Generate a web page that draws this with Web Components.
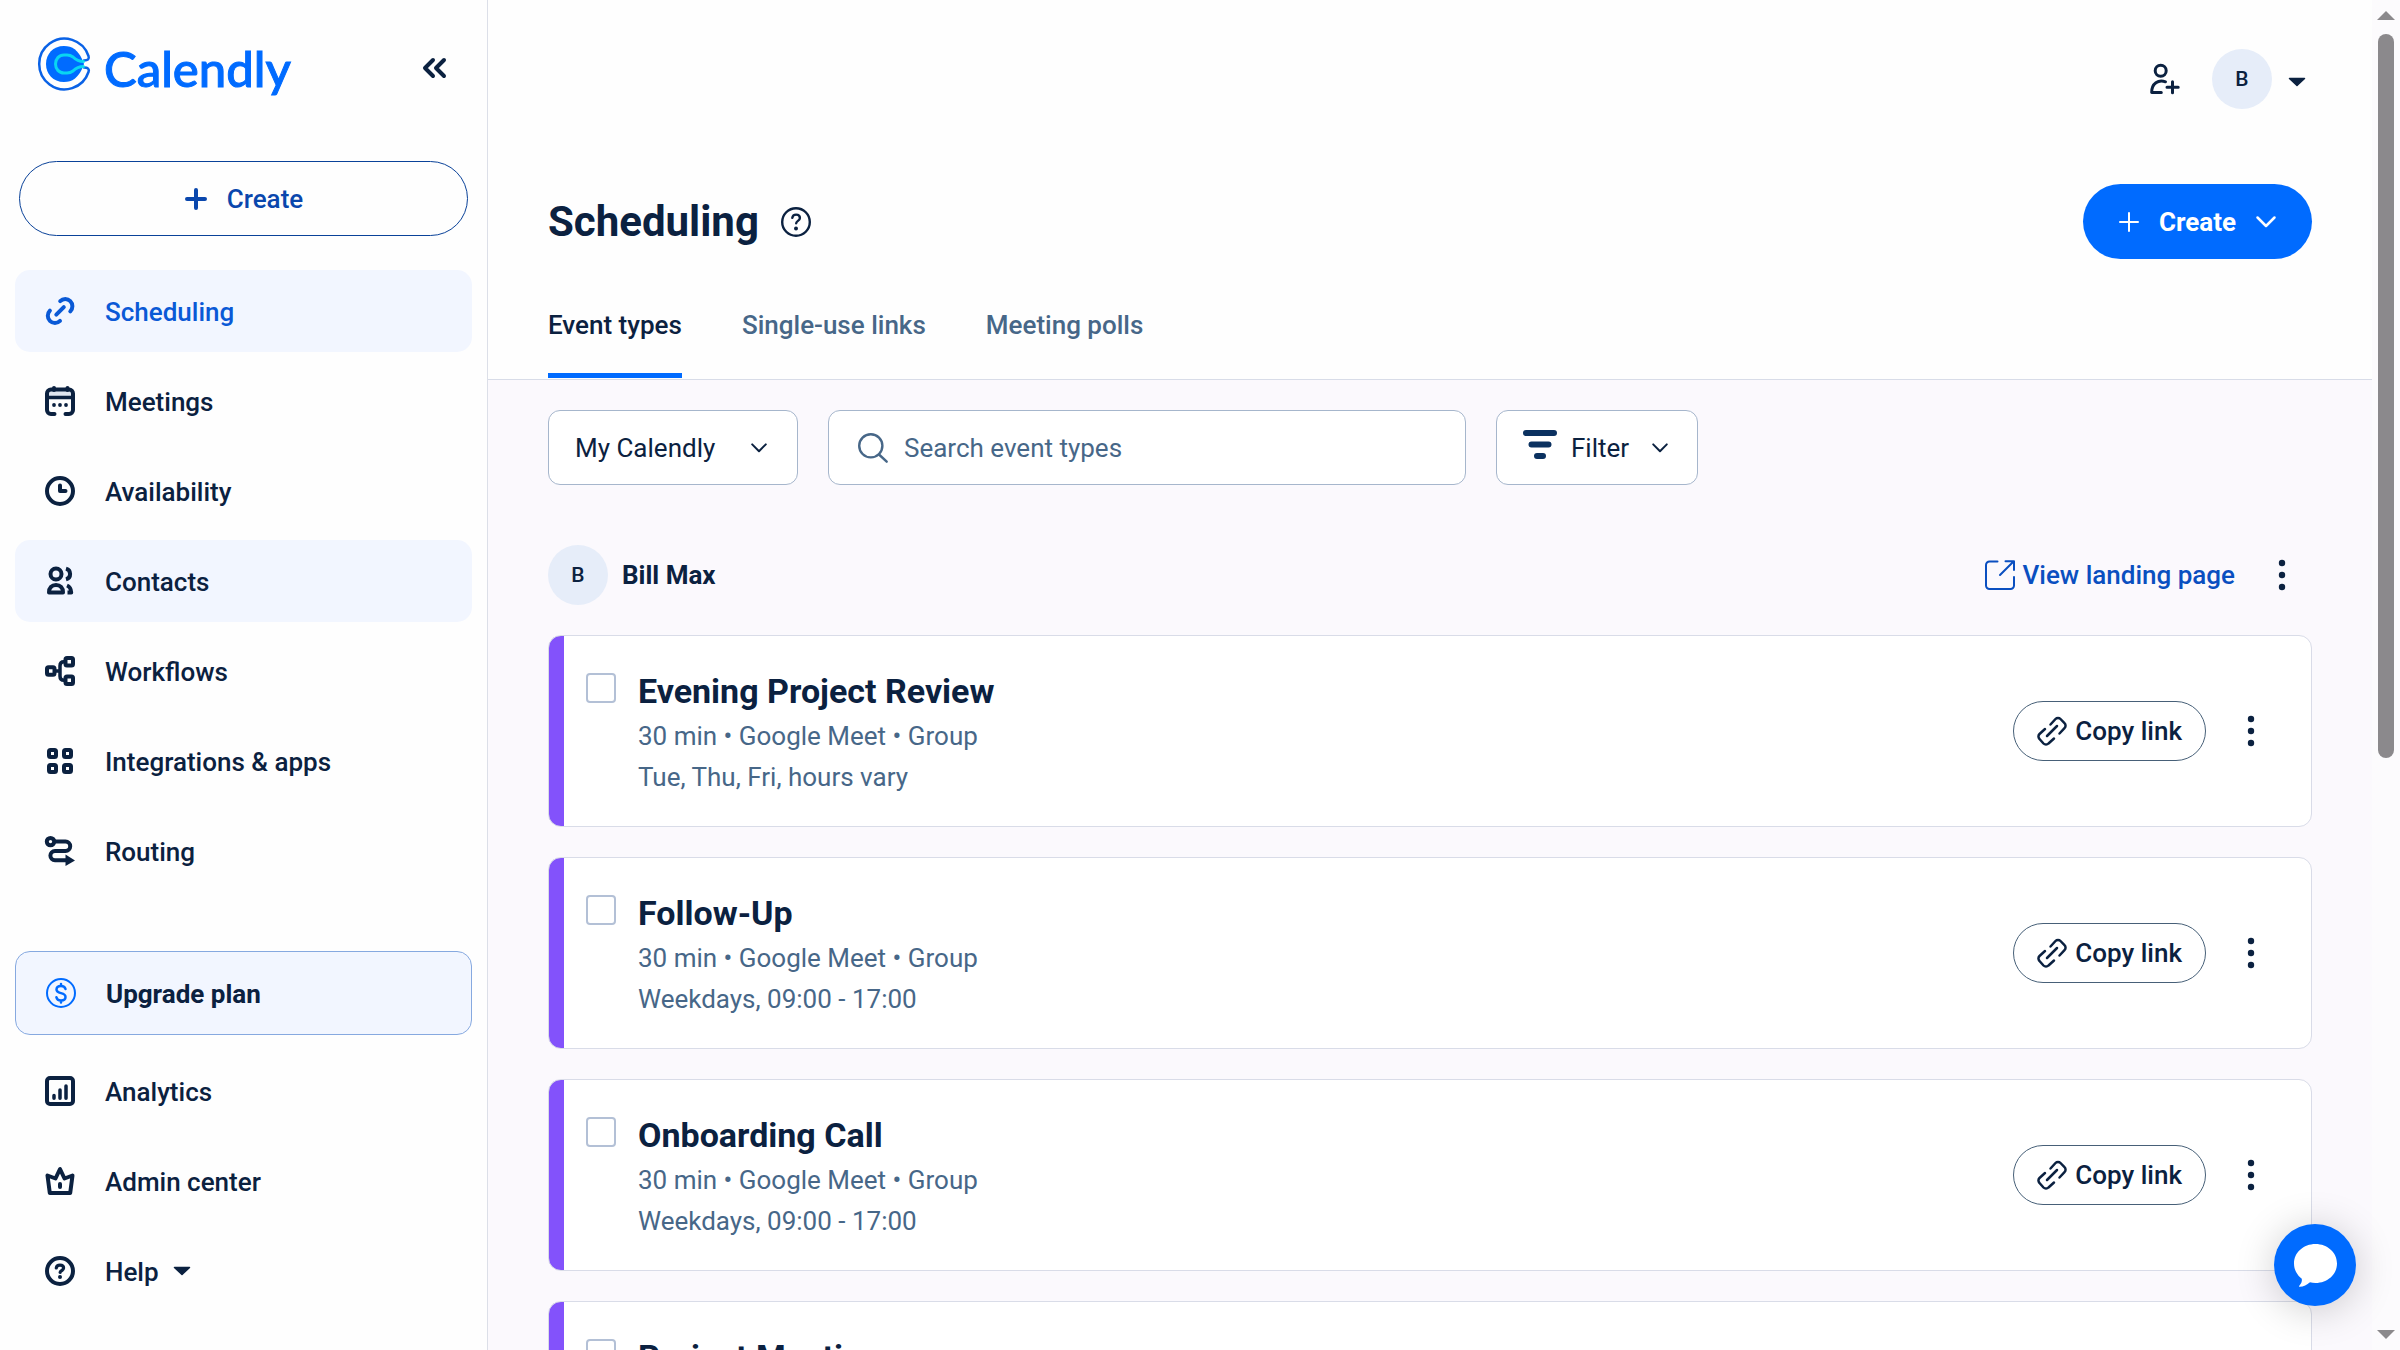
<!DOCTYPE html>
<html lang="en">
<head>
<meta charset="UTF-8">
<meta name="viewport" content="width=device-width, initial-scale=1.0">
<title>Scheduling - Calendly</title>
<style>
    body {
        margin: 0;
        font-family: Roboto, "Liberation Sans", sans-serif;
        font-size: 26px;
        line-height: 36px;
        color: #0b2140;
        background: #fefefe;
    }
</style>
</head>
<body>
<scheduling-app></scheduling-app>

<script>
const icons = {
    link: ['0 0 30 30', '<g stroke-width="4"><path d="M15.2 5.2A7.1 7.1 0 1 1 25.3 15.3M4.9 14.7A7.1 7.1 0 1 0 15 24.8M11.3 18.7L18.8 11.2"/></g>'],
    calendar: ['0 0 30 30', '<path d="M3 5H27V11H3z" fill="#dfe6f0" stroke="none"/><g stroke-width="4"><path d="M9.5 28H6a4 4 0 0 1-4-4V7.5a4 4 0 0 1 4-4H24a4 4 0 0 1 4 4V24a4 4 0 0 1-4 4H20.5"/><path d="M2 11.5H28" stroke-width="3.5"/><path d="M9 2v2M22.5 2v2"/></g><g fill="currentColor" stroke="none"><circle cx="9" cy="19" r="1.9"/><circle cx="15" cy="19" r="1.9"/><circle cx="21" cy="19" r="1.9"/></g>'],
    clock: ['0 0 30 30', '<g stroke-width="4"><circle cx="15" cy="15" r="13"/><path d="M15 9.5V15H20.5"/></g>'],
    contacts: ['0 0 30 30', '<g stroke-width="4"><circle cx="11" cy="8" r="5.5"/><path d="M4 26.5c0-4.8 2.8-7.5 7-7.5s7 2.7 7 7.5z"/><path d="M21 2.600a5.600 5.600 0 0 1 0 10.800M22 19.500c2.500 1 4 3.500 4.200 7H22.500" stroke-linecap="butt"/></g>'],
    workflows: ['0 0 30 30', '<g stroke-width="4"><rect x="2" y="11.250" width="7.500" height="7.500" rx="1.500"/><rect x="20.500" y="2" width="7.500" height="7.500" rx="1.500"/><rect x="20.500" y="20.500" width="7.500" height="7.500" rx="1.500"/><path d="M19 5.700c-3 0-4 1.800-4 4v10.600c0 2.200 1 4 4 4M10 15h5" stroke-width="3.500"/></g>'],
    grid: ['0 0 30 30', '<g stroke-width="4"><rect x="4" y="4" width="7" height="7" rx="1.500"/><rect x="19" y="4" width="7" height="7" rx="1.500"/><rect x="4" y="19" width="7" height="7" rx="1.500"/><rect x="19" y="19" width="7" height="7" rx="1.500"/></g>'],
    routing: ['0 0 30 30', '<g stroke-width="4"><circle cx="5.500" cy="5.600" r="3.700"/><path d="M10 5.600H20.500a4.700 4.700 0 0 1 0 9.400H10a4.600 4.600 0 0 0 0 9.200H21"/></g><path d="M20.500 18.500L30 24.500 20.500 30z" fill="currentColor" stroke="none"/>'],
    dollar: ['0 0 30 30', '<g stroke-width="2"><circle cx="15" cy="15" r="14"/><path stroke-width="2.500" d="M19.500 11c-.500-2-2-3-4.500-3s-4.500 1.200-4.500 3.500c0 2.500 2 3 4.500 3.600s4.500 1.400 4.500 3.900c0 2.300-2 3.500-4.500 3.500s-4.200-1.200-4.600-3.200M15 6v2M15 22.500v2"/></g>'],
    chart: ['0 0 30 30', '<g stroke-width="4"><rect x="2" y="2" width="26" height="26" rx="3"/><path d="M9 19.500V22.300M15 14V22.300M21 10V22.300" stroke-width="3.500"/></g>'],
    crown: ['0 0 30 30', '<g stroke-width="4"><path d="M2.500 9.500L4.800 27H25.200L27.500 9.500 19.500 12.500 15 3 10.500 12.500z"/><path d="M15 18v3"/></g>'],
    help: ['0 0 30 30', '<circle cx="15" cy="15" r="13" stroke-width="4"/><path stroke-width="3.200" d="M11.300 12c.300-2 1.800-2.800 3.700-2.800 2.200 0 3.600 1.100 3.600 2.900 0 2.400-3.400 2.600-3.500 4.400"/><circle cx="15" cy="21" r="2" fill="currentColor" stroke="none"/>'],
    'help-thin': ['0 0 30 30', '<circle cx="15" cy="15" r="13.800" stroke-width="2.400"/><path stroke-width="2.400" d="M11.300 10.800c.300-2.200 1.800-3.200 3.800-3.200 2.200 0 3.800 1.300 3.800 3.300 0 2.900-3.600 3-3.700 5.400"/><circle cx="15" cy="21.500" r="2" fill="currentColor" stroke="none"/>'],
    'person-add': ['0 0 30 30', '<g stroke-width="3"><circle cx="10.700" cy="6.700" r="5.500"/><path d="M15.500 17.800C8.500 15 1.500 19.500 1.700 28.500H11.300M22.500 17.800v11M17 23.300h11.200"/></g>'],
    external: ['0 0 30 30', '<g stroke-width="2"><path d="M12.500 1.500H4.500a3.500 3.500 0 0 0-3.500 3.500V25.500a3.500 3.500 0 0 0 3.500 3.500H25.500a3.500 3.500 0 0 0 3.500-3.500V17M15 15L28.500 1.500M20.500 1.200H29V10"/></g>'],
    copy: ['0 0 30 30', '<g stroke-width="2.500"><path d="M13.500 8.500l5-5.500a3.500 3.500 0 0 1 5 0l4 4.200a3.500 3.500 0 0 1 0 5L22.500 17.500M8 13L2.500 18a3.500 3.500 0 0 0 0 5l4 4.500a3.500 3.500 0 0 0 5 0L17 22.500M10 20L20 10"/></g>'],
    search: ['0 0 30 30', '<g stroke-width="2.400"><circle cx="12.800" cy="12.800" r="11.600"/><path d="M21 21.500L28.700 28.700"/></g>'],
    filter: ['0 0 34 30', '<g stroke-width="6"><path d="M3 4H31M8.500 15.500H25.500M14 27H20"/></g>'],
    collapse: ['0 0 24 24', '<g stroke-width="4"><path d="M11 4L3 12 11 20M22 4L14 12 22 20"/></g>'],
    'plus-bold': ['0 0 24 24', '<path d="M12 3V21M3 12H21" stroke-width="4"/>'],
    plus: ['0 0 24 24', '<path d="M12 3V21M3 12H21" stroke-width="2"/>'],
    chevron: ['0 0 20 20', '<path d="M1.500 5.500L10 14 18.500 5.500" stroke-width="2.500"/>'],
    caret: ['0 0 18 10', '<path d="M1.500 1.500H16.500L9 8.500z" fill="currentColor" stroke-width="1.500"/>'],
    dots: ['0 0 8 30', '<g fill="currentColor" stroke="none"><circle cx="4" cy="3" r="3.200"/><circle cx="4" cy="15" r="3.200"/><circle cx="4" cy="27" r="3.200"/></g>'],
    chat: ['0 0 43 43', '<path d="M21.500 0C33.500 0 43 8.500 43 19.500S33.500 39 21.500 39c-2 0-3.800-.200-5.500-.700-3 2.700-6.500 4.500-10.300 4.500-.700 0-.900-.500-.400-1 2-2.200 2.900-4.300 2.500-7C3 31 0 25.500 0 19.500 0 8.500 9.500 0 21.500 0z" fill="currentColor" stroke="none"/>'],
    mark: ['0 0 52 52', '<path d="M26 8c8.500 0 14 4.500 18 13l2 5-2 5c-4 8.500-9.500 13-18 13C15 44 8 36 8 26S15 8 26 8z" fill="#006bff" stroke="none"/><path d="M46 22.500c4 0 5.500-1.500 4.500-4.500A25.300 25.300 0 1 0 50.500 34c1-3-.500-4.500-4.500-4.500" stroke="#0a62e6" stroke-width="2.500"/><path d="M45.500 23.500c-5 0-7.500-1.500-10.500-4.500-2-1.500-3-2-6-2h-3c-5 0-8.500 4-8.500 9s3.500 9 8.500 9h3c3 0 4-.500 6-2 3-3 5.500-4.500 10.500-4.500" stroke="#0ae8f0" stroke-opacity=".85" stroke-width="3"/>']
}

class AppIcon extends HTMLElement{
    constructor(){
        super()
        const shadow = this.attachShadow({ mode: "open" });
        const [box, shapes] = icons[this.getAttribute('name')]
        shadow.innerHTML = `
        <style>
            :host { display: block; flex: none; width: 30px; height: 30px; }
            svg { display: block; width: 100%; height: 100%; overflow: visible; }
        </style>
        <svg viewBox="${box}" fill="none" stroke="currentColor" stroke-linecap="round" stroke-linejoin="round" aria-hidden="true">${shapes}</svg>
        `
    }
}

class NavItem extends HTMLElement{
    constructor(){
        super()
        const shadow = this.attachShadow({ mode: "open" });
        const caret = this.hasAttribute('menu') ? '<app-icon class="caret" name="caret"></app-icon>' : ''
        shadow.innerHTML = `
        <style>
            :host { display: block; }
            a {
                display: flex;
                align-items: center;
                height: 82px;
                padding-left: 30px;
                border-radius: 15px;
                color: inherit;
                font-weight: 500;
                text-decoration: none;
            }
            .label { margin-left: 30px; padding-top: 2px; }
            .caret { width: 18px; height: 10px; margin-left: 14px; }
            :host([active]) a { color: #0a59d6; background: #f2f6ff; }
            :host([hovered]) a { background: #f2f6ff; }
            :host([promo]) a { border: 1px solid #86a9e0; background: #f2f6ff; font-weight: 700; }
            :host([promo]) .icon { color: #006bff; }
        </style>
        <a href="#">
            <app-icon class="icon" name="${this.getAttribute('icon')}"></app-icon>
            <span class="label"><slot></slot></span>
            ${caret}
        </a>
        `
    }
}

class SideNav extends HTMLElement{
    constructor(){
        super()
        const shadow = this.attachShadow({ mode: "open" });
        shadow.innerHTML = `
        <style>
            :host {
                display: flex;
                flex-direction: column;
                box-sizing: border-box;
                width: 488px;
                padding: 0 15px;
                border-right: 1px solid #dcdfe8;
            }
            .top {
                display: flex;
                align-items: center;
                justify-content: space-between;
                height: 60px;
                padding: 38px 26px 0 23px;
            }
            .logo {
                display: flex;
                align-items: flex-start;
                gap: 14px;
                color: #006bff;
                font: 500 49px/60px Lato, sans-serif;
                -webkit-text-stroke: 1px currentColor;
                text-decoration: none;
            }
            .logo app-icon { width: 52px; height: 52px; }
            button { color: inherit; font: inherit; background: none; cursor: pointer; }
            .collapse { padding: 0; border: 0; }
            .collapse app-icon { width: 24px; height: 24px; }
            .create {
                display: flex;
                align-items: center;
                justify-content: center;
                gap: 19px;
                height: 75px;
                margin: 63px 4px 34px;
                border: 1px solid #0a4299;
                border-radius: 38px;
                color: #0a47ad;
                font-weight: 500;
            }
            .create app-icon { width: 24px; height: 24px; }
            nav { display: flex; flex-direction: column; gap: 8px; }
            .bottom { margin-top: 59px; }
            .bottom nav-item:first-child { margin-bottom: 7px; }
        </style>
        <div class="top">
            <a class="logo" href="#"><app-icon name="mark"></app-icon>Calendly</a>
            <button class="collapse" aria-label="Collapse menu"><app-icon name="collapse"></app-icon></button>
        </div>
        <button class="create"><app-icon name="plus-bold"></app-icon>Create</button>
        <nav>
            <nav-item icon="link" active>Scheduling</nav-item>
            <nav-item icon="calendar">Meetings</nav-item>
            <nav-item icon="clock">Availability</nav-item>
            <nav-item icon="contacts" hovered>Contacts</nav-item>
            <nav-item icon="workflows">Workflows</nav-item>
            <nav-item icon="grid">Integrations &amp; apps</nav-item>
            <nav-item icon="routing">Routing</nav-item>
        </nav>
        <nav class="bottom">
            <nav-item icon="dollar" promo>Upgrade plan</nav-item>
            <nav-item icon="chart">Analytics</nav-item>
            <nav-item icon="crown">Admin center</nav-item>
            <nav-item icon="help" menu>Help</nav-item>
        </nav>
        `
    }
}

class UserAvatar extends HTMLElement{
    constructor(){
        super()
        const shadow = this.attachShadow({ mode: "open" });
        shadow.innerHTML = `
        <style>
            :host {
                display: grid;
                place-items: center;
                flex: none;
                width: 60px;
                height: 60px;
                border-radius: 50%;
                background: #e6edf9;
                font-size: 21px;
                font-weight: 500;
            }
        </style>
        <slot></slot>
        `
    }
}

class PageHeader extends HTMLElement{
    constructor(){
        super()
        const shadow = this.attachShadow({ mode: "open" });
        shadow.innerHTML = `
        <style>
            :host { display: block; padding: 49px 60px 1px; border-bottom: 1px solid #d8dce8; }
            button { padding: 0; border: 0; color: inherit; font: inherit; background: none; cursor: pointer; }
            .account { display: flex; align-items: center; justify-content: flex-end; gap: 32px; }
            .user { display: flex; align-items: center; gap: 16px; padding-right: 6px; }
            .user app-icon { width: 18px; height: 10px; padding-top: 6px; }
            .heading { display: flex; align-items: center; margin: 75px 0 48px; }
            h1 { margin: 0 22px 0 0; font-size: 42px; line-height: 48px; font-weight: 700; }
            .create {
                display: flex;
                align-items: center;
                height: 75px;
                margin-left: auto;
                padding: 0 36px 0 34px;
                border-radius: 38px;
                background: #006bff;
                color: #fff;
                font-weight: 700;
            }
            .create app-icon:first-child { width: 24px; height: 24px; margin-right: 18px; }
            .create app-icon:last-child { width: 20px; height: 20px; margin-left: 20px; }
            .tabs { display: flex; gap: 60px; }
            .tabs a {
                padding-bottom: 30px;
                border-bottom: 5px solid transparent;
                color: #476788;
                font-weight: 500;
                text-decoration: none;
            }
            .tabs a[aria-current] { border-color: #006bff; color: #0b2140; }
        </style>
        <div class="account">
            <button aria-label="Invite user"><app-icon name="person-add"></app-icon></button>
            <button class="user" aria-label="Account menu"><user-avatar>B</user-avatar><app-icon name="caret"></app-icon></button>
        </div>
        <div class="heading">
            <h1>Scheduling</h1>
            <button aria-label="Help"><app-icon name="help-thin"></app-icon></button>
            <button class="create"><app-icon name="plus"></app-icon>Create<app-icon name="chevron"></app-icon></button>
        </div>
        <nav class="tabs">
            <a href="#" aria-current="page">Event types</a>
            <a href="#">Single-use links</a>
            <a href="#">Meeting polls</a>
        </nav>
        `
    }
}

class EventFilters extends HTMLElement{
    constructor(){
        super()
        const shadow = this.attachShadow({ mode: "open" });
        shadow.innerHTML = `
        <style>
            :host { display: flex; gap: 30px; }
            label, button {
                display: flex;
                align-items: center;
                box-sizing: border-box;
                height: 75px;
                border: 1px solid #a6b6cc;
                border-radius: 12px;
                background: #fff;
                color: #0b2140;
            }
            select, input, button { font: inherit; }
            select, input { height: 100%; border: 0; outline: 0; background: none; color: inherit; }
            .scope { display: grid; grid-template-columns: 1fr 48px; width: 250px; }
            .scope select { grid-area: 1 / 1 / 2 / 3; padding: 0 0 0 26px; appearance: none; }
            .scope app-icon { grid-area: 1 / 2; margin-left: 2px; pointer-events: none; }
            .chevron { width: 16px; height: 16px; }
            .search { width: 638px; padding: 0 29px; gap: 16px; color: #476788; }
            .search input { flex: 1; min-width: 0; padding: 0; }
            .search input::placeholder { color: #476788; opacity: 1; }
            button { padding: 0 29px 0 26px; cursor: pointer; }
            .bars { width: 34px; height: 30px; margin: 0 14px 8px 0; color: #0b3160; }
            button .chevron { margin-left: 23px; }
        </style>
        <label class="scope">
            <select aria-label="Owner"><option>My Calendly</option></select>
            <app-icon class="chevron" name="chevron"></app-icon>
        </label>
        <label class="search">
            <app-icon name="search"></app-icon>
            <input type="text" placeholder="Search event types" aria-label="Search event types">
        </label>
        <button><app-icon class="bars" name="filter"></app-icon>Filter<app-icon class="chevron" name="chevron"></app-icon></button>
        `
    }
}

class OwnerRow extends HTMLElement{
    constructor(){
        super()
        const shadow = this.attachShadow({ mode: "open" });
        shadow.innerHTML = `
        <style>
            :host { display: flex; align-items: center; }
            h2 { flex: 1; margin: 0 0 0 14px; font-size: 26px; font-weight: 700; }
            a { display: flex; align-items: center; gap: 8px; color: #0a4fc0; font-weight: 500; text-decoration: none; }
            button { margin: 0 26px 0 43px; padding: 0; border: 0; color: inherit; background: none; cursor: pointer; }
            button app-icon { width: 8px; }
        </style>
        <user-avatar>B</user-avatar>
        <h2><slot></slot></h2>
        <a href="#"><app-icon name="external"></app-icon>View landing page</a>
        <button aria-label="More options"><app-icon name="dots"></app-icon></button>
        `
    }
}

class EventCard extends HTMLElement{
    constructor(){
        super()
        const shadow = this.attachShadow({ mode: "open" });
        shadow.innerHTML = `
        <style>
            :host {
                display: flex;
                align-items: center;
                border: 1px solid #d9dce8;
                border-radius: 13px;
                background: linear-gradient(90deg, #8352fb 15px, #fff 15px);
            }
            label {
                display: flex;
                align-items: flex-start;
                flex: 1;
                gap: 22px;
                padding: 34px 0 28px 37px;
            }
            input {
                flex: none;
                width: 30px;
                height: 30px;
                margin: 3px 0 0;
                border: 2px solid #b3c0d6;
                border-radius: 4px;
                background: #fff;
                appearance: none;
            }
            h3 { margin: 0 0 4px; font-size: 34px; line-height: 42px; font-weight: 700; }
            p { margin: 0; line-height: 41px; color: #476788; }
            button { padding: 0; border: 0; background: none; color: inherit; font: inherit; cursor: pointer; }
            .copy {
                display: flex;
                align-items: center;
                gap: 8px;
                height: 60px;
                padding: 0 23px;
                border: 1px solid #476078;
                border-radius: 30px;
                font-weight: 500;
            }
            .more { margin: 0 56px 0 41px; }
            .more app-icon { width: 8px; }
        </style>
        <label>
            <input type="checkbox">
            <span>
                <h3><slot></slot></h3>
                <p>${this.getAttribute('details')}</p>
                <p>${this.getAttribute('hours')}</p>
            </span>
        </label>
        <button class="copy"><app-icon name="copy"></app-icon>Copy link</button>
        <button class="more" aria-label="More options"><app-icon name="dots"></app-icon></button>
        `
    }
}

class ScrollTrack extends HTMLElement{
    constructor(){
        super()
        const shadow = this.attachShadow({ mode: "open" });
        shadow.innerHTML = `
        <style>
            :host {
                display: flex;
                flex-direction: column;
                align-items: center;
                box-sizing: border-box;
                width: 28px;
                padding: 11px 0;
                background: #fcfbfd;
            }
            svg { flex: none; width: 18px; height: 9px; fill: #8b898c; }
            .track { flex: 1; width: 16px; margin: 14px 0; }
            .thumb { height: 56.5%; border-radius: 8px; background: #8b898c; }
        </style>
        <svg viewBox="0 0 18 9"><path d="M9 0L18 9H0z"/></svg>
        <div class="track"><div class="thumb"></div></div>
        <svg viewBox="0 0 18 9"><path d="M0 0H18L9 9z"/></svg>
        `
    }
}

class SchedulingApp extends HTMLElement{
    constructor(){
        super()
        const shadow = this.attachShadow({ mode: "open" });
        shadow.innerHTML = `
        <style>
            :host { display: flex; height: 100vh; overflow: hidden; }
            side-nav, scroll-track { flex: none; }
            main { flex: 1; min-width: 0; overflow: hidden; background: #fbf9fd; }
            page-header { background: #fefefe; }
            .content { padding: 30px 60px; }
            owner-row { margin: 60px 0 30px; }
            .events { display: flex; flex-direction: column; gap: 30px; }
            .chat {
                position: fixed;
                right: 44px;
                bottom: 44px;
                display: grid;
                place-items: center;
                width: 82px;
                height: 82px;
                padding: 0;
                border: 0;
                border-radius: 50%;
                background: #006bff;
                color: #fff;
                box-shadow: 0 4px 40px rgba(0, 0, 0, 0.2);
            }
            .chat app-icon { width: 43px; height: 43px; }
        </style>
        <side-nav></side-nav>
        <main>
            <page-header></page-header>
            <div class="content">
                <event-filters></event-filters>
                <owner-row>Bill Max</owner-row>
                <div class="events">
                    <event-card details="30 min • Google Meet • Group" hours="Tue, Thu, Fri, hours vary">Evening Project Review</event-card>
                    <event-card details="30 min • Google Meet • Group" hours="Weekdays, 09:00 - 17:00">Follow-Up</event-card>
                    <event-card details="30 min • Google Meet • Group" hours="Weekdays, 09:00 - 17:00">Onboarding Call</event-card>
                    <event-card details="30 min • Google Meet • Group" hours="Weekdays, 09:00 - 17:00">Project Meeting</event-card>
                </div>
            </div>
        </main>
        <scroll-track></scroll-track>
        <button class="chat" aria-label="Open chat"><app-icon name="chat"></app-icon></button>
        `
    }
}

customElements.define('app-icon', AppIcon)
customElements.define('nav-item', NavItem)
customElements.define('side-nav', SideNav)
customElements.define('user-avatar', UserAvatar)
customElements.define('page-header', PageHeader)
customElements.define('event-filters', EventFilters)
customElements.define('owner-row', OwnerRow)
customElements.define('event-card', EventCard)
customElements.define('scroll-track', ScrollTrack)
customElements.define('scheduling-app', SchedulingApp)
</script>
</body>
</html>
